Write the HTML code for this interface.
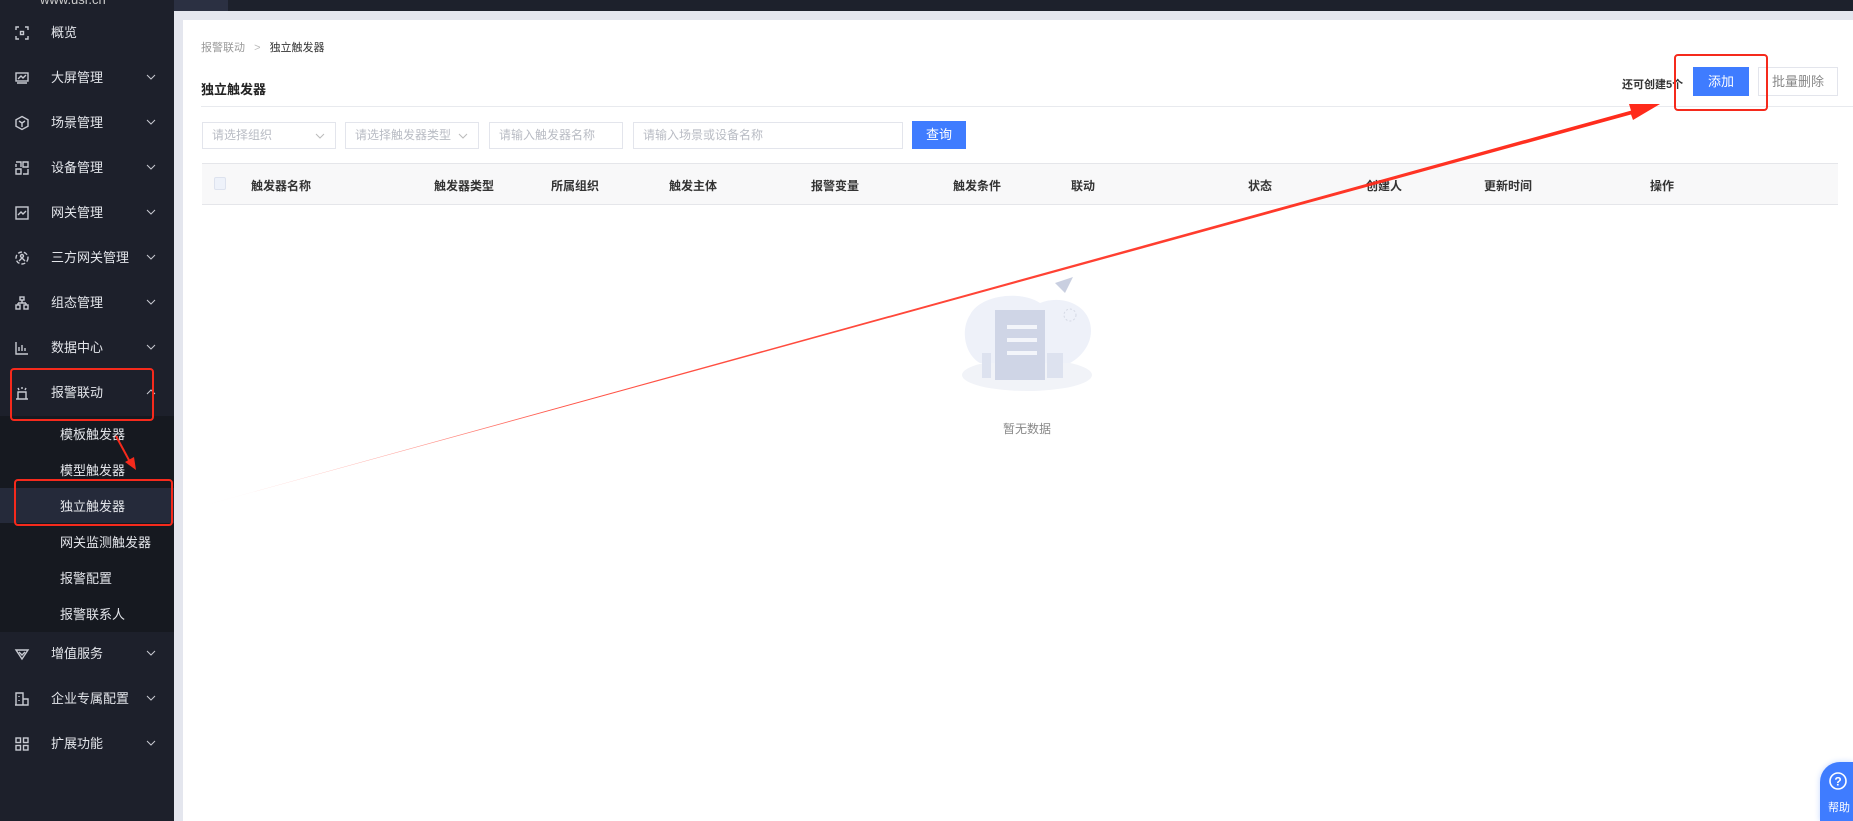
<!DOCTYPE html>
<html style="overflow:hidden;width:1853px;height:821px"><head><meta charset="utf-8"><style>
*{margin:0;padding:0;box-sizing:border-box}
body{width:1853px;height:821px;overflow:hidden;background:#e4e6ee;font-family:"Liberation Sans","Noto Sans CJK SC",sans-serif;position:relative}
.top{position:absolute;left:0;top:0;width:1853px;height:11px;background:#1d212c}
.tab{position:absolute;left:174px;top:0;width:54px;height:11px;background:#2b3042}
.side{position:absolute;left:0;top:0;width:174px;height:821px;background:#1d202b}
.mi{position:absolute;left:0;width:174px;height:45px;color:#e3e5ea;font-size:13px;line-height:45px}
.mi span{position:absolute;left:51px}
.mi svg.ic{position:absolute;left:14px;top:15px}
.mi .ch{position:absolute;left:146px;top:19px}
.sub{position:absolute;left:0;top:416px;width:174px;height:216px;background:#161920}
.si{position:absolute;left:60px;color:#e3e5ea;font-size:13px}
.panel{position:absolute;left:183px;top:20px;width:1670px;height:801px;background:#fff}
.abs{position:absolute}
.inp{position:absolute;top:122px;height:27px;border:1px solid #e3e5ec;font-size:12px;color:#b9bcc4;line-height:25px;padding-left:9px;background:#fff}
.th{position:absolute;top:177px;font-size:12px;font-weight:bold;color:#333}
</style></head><body>
<div class="top"></div><div class="tab"></div>
<div class="side">
 <div style="position:absolute;left:40px;top:-8px;color:#ccc;font-size:13px">www.usr.cn</div>
 <div class="mi" style="top:10px"><svg class="ic" width="16" height="16" viewBox="0 0 16 16" fill="none" stroke="#c8cad2" stroke-width="1.4"><path d="M2 5V2h3M11 2h3v3M14 11v3h-3M5 14H2v-3"/><rect x="6.5" y="6.5" width="3" height="3"/></svg><span>概览</span></div>
 <div class="mi" style="top:55px"><svg class="ic" width="16" height="16" viewBox="0 0 16 16" fill="none" stroke="#c8cad2" stroke-width="1.4"><rect x="2" y="3" width="12" height="8"/><path d="M4 9l3-3 2 2 3-3M3 13h10"/></svg><span>大屏管理</span><svg class="ch" width="10" height="6"><path d="M1 1l4 4 4-4" stroke="#c8cad2" fill="none"/></svg></div>
 <div class="mi" style="top:100px"><svg class="ic" width="16" height="16" viewBox="0 0 16 16" fill="none" stroke="#c8cad2" stroke-width="1.4"><path d="M8 1.5l6 3.3v6.4L8 14.5 2 11.2V4.8z"/><path d="M5 6l3 2 3-2M8 8v4"/></svg><span>场景管理</span><svg class="ch" width="10" height="6"><path d="M1 1l4 4 4-4" stroke="#c8cad2" fill="none"/></svg></div>
 <div class="mi" style="top:145px"><svg class="ic" width="16" height="16" viewBox="0 0 16 16" fill="none" stroke="#c8cad2" stroke-width="1.4"><path d="M2 2h5v5M2 7V4M9 2h5v5H9zM2 9h5v5H2zM9 14h5v-5"/></svg><span>设备管理</span><svg class="ch" width="10" height="6"><path d="M1 1l4 4 4-4" stroke="#c8cad2" fill="none"/></svg></div>
 <div class="mi" style="top:190px"><svg class="ic" width="16" height="16" viewBox="0 0 16 16" fill="none" stroke="#c8cad2" stroke-width="1.4"><rect x="2" y="2" width="12" height="12"/><path d="M4 10l3-3 2 2 3-3"/></svg><span>网关管理</span><svg class="ch" width="10" height="6"><path d="M1 1l4 4 4-4" stroke="#c8cad2" fill="none"/></svg></div>
 <div class="mi" style="top:235px"><svg class="ic" width="16" height="16" viewBox="0 0 16 16" fill="none" stroke="#c8cad2" stroke-width="1.4"><circle cx="8" cy="8" r="6" stroke-dasharray="4 2"/><circle cx="8" cy="6" r="1.5"/><path d="M5 11l3-3 3 3"/></svg><span>三方网关管理</span><svg class="ch" width="10" height="6"><path d="M1 1l4 4 4-4" stroke="#c8cad2" fill="none"/></svg></div>
 <div class="mi" style="top:280px"><svg class="ic" width="16" height="16" viewBox="0 0 16 16" fill="none" stroke="#c8cad2" stroke-width="1.4"><rect x="6" y="2" width="4" height="3"/><path d="M8 5v3M4 8h8M4 8v2M12 8v2"/><rect x="2" y="10" width="4" height="4"/><rect x="10" y="10" width="4" height="4"/></svg><span>组态管理</span><svg class="ch" width="10" height="6"><path d="M1 1l4 4 4-4" stroke="#c8cad2" fill="none"/></svg></div>
 <div class="mi" style="top:325px"><svg class="ic" width="16" height="16" viewBox="0 0 16 16" fill="none" stroke="#c8cad2" stroke-width="1.4"><path d="M2 2v12h12M5 11V7M8 11V5M11 11V8"/></svg><span>数据中心</span><svg class="ch" width="10" height="6"><path d="M1 1l4 4 4-4" stroke="#c8cad2" fill="none"/></svg></div>
 <div class="mi" style="top:370px"><svg class="ic" width="16" height="16" viewBox="0 0 16 16" fill="none" stroke="#c8cad2" stroke-width="1.4"><path d="M4 14V7h8v7M2 14h12M4 3l1 2M8 2v2M12 3l-1 2"/></svg><span>报警联动</span><svg class="ch" width="10" height="6"><path d="M1 5l4-4 4 4" stroke="#c8cad2" fill="none"/></svg></div>
 <div class="sub">
  <div class="abs" style="left:0;top:72px;width:174px;height:35px;background:#252a3a"></div>
  <div class="si" style="top:8px">模板触发器</div>
  <div class="si" style="top:44px">模型触发器</div>
  <div class="si" style="top:80px">独立触发器</div>
  <div class="si" style="top:116px">网关监测触发器</div>
  <div class="si" style="top:152px">报警配置</div>
  <div class="si" style="top:188px">报警联系人</div>
 </div>
 <div class="mi" style="top:631px"><svg class="ic" width="16" height="16" viewBox="0 0 16 16" fill="none" stroke="#c8cad2" stroke-width="1.4"><path d="M2 4h12l-6 9z"/><path d="M5 6l3 3 3-3"/></svg><span>增值服务</span><svg class="ch" width="10" height="6"><path d="M1 1l4 4 4-4" stroke="#c8cad2" fill="none"/></svg></div>
 <div class="mi" style="top:676px"><svg class="ic" width="16" height="16" viewBox="0 0 16 16" fill="none" stroke="#c8cad2" stroke-width="1.4"><path d="M2 14V2h7v12M9 8h5v6H1M5 5v1M5 9v1"/></svg><span>企业专属配置</span><svg class="ch" width="10" height="6"><path d="M1 1l4 4 4-4" stroke="#c8cad2" fill="none"/></svg></div>
 <div class="mi" style="top:721px"><svg class="ic" width="16" height="16" viewBox="0 0 16 16" fill="none" stroke="#c8cad2" stroke-width="1.4"><rect x="2" y="2" width="4.5" height="4.5"/><rect x="9.5" y="2" width="4.5" height="4.5"/><rect x="2" y="9.5" width="4.5" height="4.5"/><rect x="9.5" y="9.5" width="4.5" height="4.5"/></svg><span>扩展功能</span><svg class="ch" width="10" height="6"><path d="M1 1l4 4 4-4" stroke="#c8cad2" fill="none"/></svg></div>
</div>
<div class="panel"></div>
<div class="abs" style="left:201px;top:39px;font-size:11px;color:#999">报警联动 <span style="color:#bbb;margin:0 6px">&gt;</span> <span style="color:#333">独立触发器</span></div>
<div class="abs" style="left:201px;top:79px;font-size:13px;font-weight:bold;color:#222">独立触发器</div>
<div class="abs" style="left:201px;top:106px;width:1652px;height:1px;background:#e8eaee"></div>
<div class="abs" style="left:1622px;top:76px;font-size:11px;font-weight:bold;color:#333">还可创建5个</div>
<div class="abs" style="left:1693px;top:67px;width:56px;height:29px;background:#3f7cff;color:#fff;font-size:13px;text-align:center;line-height:29px">添加</div>
<div class="abs" style="left:1758px;top:67px;width:80px;height:29px;border:1px solid #e3e5ec;color:#888;font-size:13px;text-align:center;line-height:27px">批量删除</div>
<div class="inp" style="left:202px;width:134px">请选择组织<svg class="abs" style="right:10px;top:10px" width="10" height="6"><path d="M1 1l4 4 4-4" stroke="#bbb" fill="none"/></svg></div>
<div class="inp" style="left:345px;width:134px">请选择触发器类型<svg class="abs" style="right:10px;top:10px" width="10" height="6"><path d="M1 1l4 4 4-4" stroke="#bbb" fill="none"/></svg></div>
<div class="inp" style="left:489px;width:134px">请输入触发器名称</div>
<div class="inp" style="left:633px;width:270px">请输入场景或设备名称</div>
<div class="abs" style="left:912px;top:121px;width:54px;height:28px;background:#3f7cff;color:#fff;font-size:13px;text-align:center;line-height:28px">查询</div>
<div class="abs" style="left:202px;top:163px;width:1636px;height:42px;background:#f8f8f9;border-top:1px solid #e5e6ea;border-bottom:1px solid #e5e6ea"></div>
<div class="abs" style="left:214px;top:177px;width:12px;height:13px;border:1px solid #dde2ee;background:#eef2fa;border-radius:2px"></div>
<div class="th" style="left:251px">触发器名称</div><div class="th" style="left:434px">触发器类型</div><div class="th" style="left:551px">所属组织</div><div class="th" style="left:669px">触发主体</div><div class="th" style="left:811px">报警变量</div><div class="th" style="left:953px">触发条件</div><div class="th" style="left:1071px">联动</div><div class="th" style="left:1248px">状态</div><div class="th" style="left:1366px">创建人</div><div class="th" style="left:1484px">更新时间</div><div class="th" style="left:1650px">操作</div>
<svg class="abs" style="left:955px;top:275px" width="150" height="125" viewBox="0 0 150 125">
 <ellipse cx="72" cy="100" rx="65" ry="16" fill="#f1f3f8"/>
 <path d="M15 40c10-20 50-25 70-12 20-8 45 0 50 20 5 20-10 35-20 40H25C10 80 5 55 15 40z" fill="#eef1f9"/>
 <rect x="40" y="35" width="50" height="70" fill="#cfd5e6"/>
 <rect x="52" y="50" width="30" height="4" fill="#f3f5fa"/><rect x="52" y="63" width="30" height="4" fill="#f3f5fa"/><rect x="52" y="76" width="30" height="4" fill="#f3f5fa"/>
 <rect x="27" y="78" width="9" height="25" fill="#dde2ef"/><rect x="92" y="78" width="16" height="25" fill="#dde2ef"/>
 <path d="M100 8l18-6-8 16z" fill="#c9cfe0"/><circle cx="115" cy="40" r="6" fill="none" stroke="#d5d9e5" stroke-dasharray="2 2"/>
</svg>
<div class="abs" style="left:1003px;top:420px;font-size:12px;color:#888">暂无数据</div>
<div class="abs" style="left:1820px;top:762px;width:33px;height:59px;background:#3f7cff;border-radius:20px 0 0 0;box-shadow:0 0 6px rgba(63,124,255,.3)"></div>
<svg class="abs" style="left:1828px;top:771px" width="20" height="20"><circle cx="10" cy="10" r="8" fill="none" stroke="#fff" stroke-width="1.6"/><text x="10" y="14.5" font-size="12" font-weight="bold" fill="#fff" text-anchor="middle" font-family="Liberation Sans">?</text></svg>
<div class="abs" style="left:1828px;top:799px;font-size:11px;color:#fff">帮助</div>
<svg class="abs" style="left:0;top:0" width="1853" height="821">
 <defs><linearGradient id="g" x1="195" y1="508" x2="1660" y2="104" gradientUnits="userSpaceOnUse"><stop offset="0" stop-color="#ff2a1a" stop-opacity="0"/><stop offset="0.25" stop-color="#ff2a1a" stop-opacity="0.8"/><stop offset="1" stop-color="#ff2a1a"/></linearGradient></defs>
 <polygon points="195,508 1631,114.5 1633,120 1660,104 1629,104 1631,110.6" fill="url(#g)"/>
 <g fill="none" stroke="#f52a1c" stroke-width="2"><rect x="1675" y="55" width="92" height="55" rx="3"/><rect x="11" y="369" width="142" height="51" rx="3"/><rect x="15" y="480" width="157" height="45" rx="3"/></g>
 <path d="M116 436L130 462" stroke="#f52a1c" stroke-width="2"/><polygon points="125,462 136,470 134,457" fill="#f52a1c"/>
</svg>
</body></html>
